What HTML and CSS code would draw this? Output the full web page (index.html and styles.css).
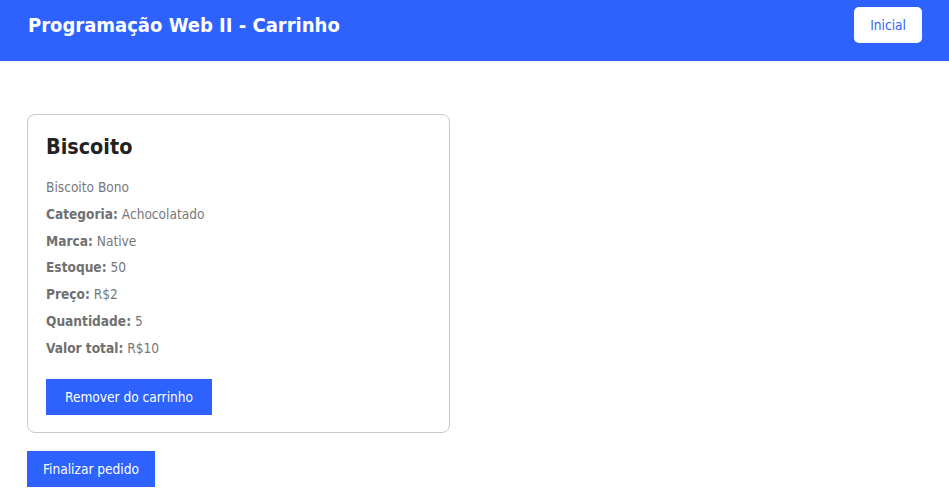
FILE: index.html
```html
<!DOCTYPE html>
<html lang="pt-BR">
<head>
<meta charset="utf-8">
<title>Carrinho</title>
<link rel="stylesheet" href="styles.css">
</head>
<body>
<header class="topbar">
  <h1 class="brand">Programação Web II - Carrinho</h1>
  <a class="nav-btn" href="#">Inicial</a>
</header>
<main class="content">
  <section class="card">
    <h2 class="card-title">Biscoito</h2>
    <p class="line">Biscoito Bono</p>
    <p class="line"><b>Categoria:</b> Achocolatado</p>
    <p class="line"><b>Marca:</b> Native</p>
    <p class="line"><b>Estoque:</b> 50</p>
    <p class="line"><b>Preço:</b> R$2</p>
    <p class="line"><b>Quantidade:</b> 5</p>
    <p class="line"><b>Valor total:</b> R$10</p>
    <button class="btn card-btn">Remover do carrinho</button>
  </section>
  <button class="btn finish-btn">Finalizar pedido</button>
</main>
</body>
</html>
```

FILE: styles.css
```css
* { box-sizing: border-box; }
body {
  margin: 0;
  font-family: "DejaVu Sans Condensed", "DejaVu Sans", sans-serif;
  font-stretch: semi-condensed;
  background: #fff;
}
.topbar {
  height: 61px;
  background: #2d62ff;
  display: flex;
  justify-content: space-between;
  align-items: center;
  padding: 0 27px 11px 28px;
}
.brand {
  margin: 0;
  color: #fff;
  font-size: 20px;
  font-weight: bold;
}
.nav-btn {
  display: flex;
  align-items: center;
  height: 36px;
  padding: 0 16px;
  background: #fff;
  color: #2d62ff;
  border-radius: 5px;
  font-size: 13.6px;
  text-decoration: none;
}
.content {
  padding: 53px 27px 0;
}
.card {
  width: 423px;
  border: 1px solid #c8c8c8;
  border-radius: 8px;
  padding: 18px 18px 17px;
}
.card-title {
  margin: 0 0 14px;
  font-size: 21.4px;
  line-height: 27px;
  color: #222;
}
.line {
  margin: 0;
  font-size: 13.6px;
  line-height: 26.8px;
  color: #777;
}
.line b { color: #707070; }
.btn {
  display: block;
  height: 36px;
  padding: 0 18px;
  border: 0;
  background: #2d62ff;
  color: #fff;
  font-family: inherit;
  font-size: 13.6px;
}
.card-btn { margin-top: 17px; padding: 0 19px; }
.finish-btn { margin-top: 18px; padding: 0 16px; }
```
